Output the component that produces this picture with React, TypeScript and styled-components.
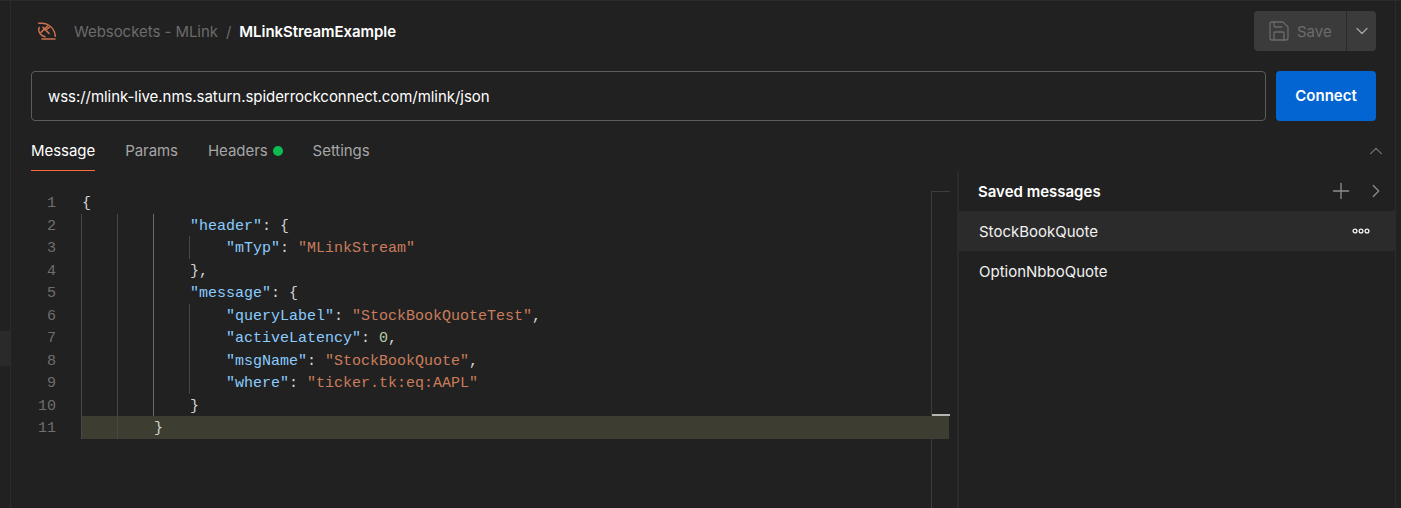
import React from "react";
import styled, { createGlobalStyle } from "styled-components";
import { ChevronDown, ChevronRight, ChevronUp, Plus, Save } from "lucide-react";

const GlobalStyle = createGlobalStyle`
	html, body {
		margin: 0;
		padding: 0;
		background: #212121;
		overflow: hidden;
	}
`;

const UI_FONT = `Inter, "Liberation Sans", sans-serif`;

// 전체 영역
const Wrapper = styled.div`
	position: relative;
	width: 1401px;
	height: 508px;
	display: flex;
	overflow: hidden;
	box-sizing: border-box;
	border-top: 1px solid #2b2b2b;
	background: #212121;
	font-family: ${UI_FONT};
`;

const TopAccent = styled.div`
	position: absolute;
	top: -1px;
	left: 451px;
	width: 194px;
	height: 1px;
	background: #ff6c37;
`;

const LeftRail = styled.div`
	width: 10px;
	flex-shrink: 0;
	padding-top: 330px;
	border-right: 1px solid #2b2b2b;
`;

const RailItem = styled.div`
	height: 35px;
	background: #2a2a2a;
`;

const RightRail = styled.div`
	width: 5px;
	flex-shrink: 0;
	border-left: 1px solid #2b2b2b;
`;

const Main = styled.div`
	flex: 1;
	min-width: 0;
	display: flex;
	flex-direction: column;
`;

const Header = styled.div`
	height: 40px;
	margin-top: 10px;
	padding: 0 19px 0 27px;
	display: flex;
	align-items: center;
`;

const Crumbs = styled.div`
	flex: 1;
	display: flex;
	align-items: center;
	font-size: 15px;
	letter-spacing: -0.05px;
`;

const Logo = styled.svg`
	width: 18px;
	height: 18px;
	margin-right: 18px;
`;

const CrumbParent = styled.span`
	color: #6b6b6b;
`;

const CrumbSlash = styled.span`
	color: #6b6b6b;
	margin: 0 8px;
`;

const CrumbName = styled.span`
	color: #ffffff;
	font-weight: 600;
`;

const SaveGroup = styled.div`
	width: 122px;
	height: 40px;
	display: flex;
	border-radius: 4px;
	overflow: hidden;
	background: #3b3b3b;
	color: #6b6b6b;
`;

const SaveLabel = styled.div`
	flex: 1;
	display: flex;
	align-items: center;
	gap: 6px;
	padding-left: 13px;
	font-size: 15px;
	border-right: 1px solid #2b2b2b;
`;

const SaveMenu = styled.div`
	width: 29px;
	display: flex;
	align-items: center;
	justify-content: center;
	color: #a6a6a6;
`;

const UrlRow = styled.div`
	margin-top: 20px;
	padding: 0 19px 0 20px;
	display: flex;
	gap: 10px;
`;

const UrlInput = styled.div`
	flex: 1;
	height: 50px;
	box-sizing: border-box;
	padding-left: 16px;
	display: flex;
	align-items: center;
	border: 1px solid #5c5c5c;
	border-radius: 4px;
	color: #ffffff;
	font-size: 15px;
	letter-spacing: -0.05px;
`;

const ConnectButton = styled.button`
	width: 100px;
	height: 50px;
	padding: 0 0 2px;
	border: none;
	border-radius: 4px;
	background: #0265d2;
	color: #ffffff;
	font-family: ${UI_FONT};
	font-size: 15px;
	font-weight: 600;
`;

const TabBar = styled.div`
	height: 50px;
	padding: 0 19px 0 20px;
	display: flex;
	gap: 30px;
	align-items: stretch;
`;

const Tab = styled.div<{ $active?: boolean }>`
	display: flex;
	align-items: center;
	gap: 5px;
	box-sizing: border-box;
	padding-top: 10px;
	font-size: 15px;
	letter-spacing: -0.05px;
	color: ${(props) => (props.$active ? "#ffffff" : "#a6a6a6")};
	border-bottom: 1px solid ${(props) => (props.$active ? "#ff6c37" : "transparent")};
`;

const Dot = styled.span`
	width: 10px;
	height: 10px;
	border-radius: 50%;
	background: #0cbb52;
`;

const TabChevron = styled.div`
	margin-left: auto;
	margin-right: -11px;
	padding-top: 10px;
	display: flex;
	align-items: center;
	color: #6b6b6b;
`;

const Body = styled.div`
	flex: 1;
	min-height: 0;
	display: flex;
`;

// 코드 에디터 영역
const Editor = styled.div`
	position: relative;
	width: 938px;
	flex-shrink: 0;
	padding-top: 20px;
	font-family: "Liberation Mono", monospace;
	font-size: 15px;
`;

const Ruler = styled.div`
	position: absolute;
	top: 20px;
	bottom: 0;
	left: 920px;
	width: 18px;
	border-left: 1px solid #3d3d3d;
	border-top: 1px solid #3d3d3d;
`;

const RulerMark = styled.div`
	position: absolute;
	top: 222px;
	left: 0;
	width: 18px;
	height: 2px;
	background: #b5b5ad;
`;

const Line = styled.div`
	height: 22.5px;
	line-height: 26.5px;
	display: flex;
	white-space: pre;
	color: #d4d4d4;
`;

const LineNo = styled.span`
	width: 45px;
	flex-shrink: 0;
	margin-right: 25px;
	text-align: right;
	color: #6e6e6e;
`;

const LineBody = styled.div<{ $current?: boolean }>`
	flex: 1;
	display: flex;
	background: ${(props) => (props.$current ? "#3e3d32" : "transparent")};
`;

const Indent = styled.span<{ $active?: boolean }>`
	width: 36px;
	flex-shrink: 0;
	box-sizing: border-box;
	border-left: 1px solid ${(props) => (props.$active ? "#6a6a6a" : "#484848")};
`;

const Code = styled.span`
	padding-left: 1px;
`;

const Key = styled.span`
	color: #8accff;
`;

const Str = styled.span`
	color: #c97d5c;
`;

const Num = styled.span`
	color: #b5cea8;
`;

// 저장된 메시지 패널
const Side = styled.div`
	flex: 1;
	min-width: 0;
	margin-left: 8px;
	border-left: 2px solid #2b2b2b;
`;

const SideHead = styled.div`
	height: 40px;
	padding: 0 19px 0 19px;
	display: flex;
	align-items: center;
	color: #ffffff;
	font-size: 15px;
	font-weight: 600;
`;

const SideTitle = styled.span`
	flex: 1;
`;

const SideIcons = styled.div`
	display: flex;
	align-items: center;
	gap: 11px;
	margin-right: -11px;
	color: #8f8f8f;
`;

const SavedRow = styled.div<{ $active?: boolean }>`
	height: 40px;
	padding: 0 25px 0 20px;
	display: flex;
	align-items: center;
	justify-content: space-between;
	color: #f2f2f2;
	font-size: 15px;
	background: ${(props) => (props.$active ? "#2b2b2b" : "transparent")};
`;

const MoreIcon = styled.svg`
	width: 18px;
	height: 6px;
`;

type CodeLine = {
	guides: number;
	extraGuide?: boolean;
	content: React.ReactNode;
};

const codeLines: CodeLine[] = [
	{ guides: 0, content: "{" },
	{ guides: 3, content: <><Key>"header"</Key>: {"{"}</> },
	{ guides: 3, extraGuide: true, content: <><Key>"mTyp"</Key>: <Str>"MLinkStream"</Str></> },
	{ guides: 3, content: "}," },
	{ guides: 3, content: <><Key>"message"</Key>: {"{"}</> },
	{ guides: 3, extraGuide: true, content: <><Key>"queryLabel"</Key>: <Str>"StockBookQuoteTest"</Str>,</> },
	{ guides: 3, extraGuide: true, content: <><Key>"activeLatency"</Key>: <Num>0</Num>,</> },
	{ guides: 3, extraGuide: true, content: <><Key>"msgName"</Key>: <Str>"StockBookQuote"</Str>,</> },
	{ guides: 3, extraGuide: true, content: <><Key>"where"</Key>: <Str>"ticker.tk:eq:AAPL"</Str></> },
	{ guides: 3, content: "}" },
	{ guides: 2, content: "}" },
];

const App = () => {
	return (
		<Wrapper>
			<GlobalStyle />
			<TopAccent />
			<LeftRail>
				<RailItem />
			</LeftRail>
			<Main>
				<Header>
					<Crumbs>
						<Logo viewBox="0 0 18 18" fill="none" stroke="#cc7150" strokeWidth="1.5" strokeLinecap="round">
							<path d="M.7 1.2h3.6c2.2 0 4.4.6 6.2 1.8 3.6 2.4 6.6 6.4 6.8 11.2" />
							<path d="M4 17h13" />
							<path d="M1.2 5.4c-.8 2.2-.4 4.6 1.2 6.6 1.2 1.5 2.8 2.4 4.6 2.8" />
							<path d="M9.6 4 3 10.4M5 5.4l6 6M7.8 8l3.6-2.8" />
						</Logo>
						<CrumbParent>Websockets - MLink</CrumbParent>
						<CrumbSlash>/</CrumbSlash>
						<CrumbName>MLinkStreamExample</CrumbName>
					</Crumbs>
					<SaveGroup>
						<SaveLabel>
							<Save size={24} strokeWidth={1.3} />
							Save
						</SaveLabel>
						<SaveMenu>
							<ChevronDown size={20} strokeWidth={1.5} />
						</SaveMenu>
					</SaveGroup>
				</Header>
				<UrlRow>
					<UrlInput>wss://mlink-live.nms.saturn.spiderrockconnect.com/mlink/json</UrlInput>
					<ConnectButton>Connect</ConnectButton>
				</UrlRow>
				<TabBar>
					<Tab $active>Message</Tab>
					<Tab>Params</Tab>
					<Tab>
						Headers
						<Dot />
					</Tab>
					<Tab>Settings</Tab>
					<TabChevron>
						<ChevronUp size={22} strokeWidth={1.2} />
					</TabChevron>
				</TabBar>
				<Body>
					<Editor>
						<Ruler>
							<RulerMark />
						</Ruler>
						{codeLines.map((line, i) => (
							<Line key={i}>
								<LineNo>{i + 1}</LineNo>
								<LineBody $current={i === codeLines.length - 1}>
									{Array.from({ length: line.guides }).map((_, g) => (
										<Indent key={g} $active={g === 2} />
									))}
									{line.extraGuide && <Indent />}
									<Code>{line.content}</Code>
								</LineBody>
							</Line>
						))}
					</Editor>
					<Side>
						<SideHead>
							<SideTitle>Saved messages</SideTitle>
							<SideIcons>
								<Plus size={26} strokeWidth={1.2} />
								<ChevronRight size={22} strokeWidth={1.3} />
							</SideIcons>
						</SideHead>
						<SavedRow $active>
							StockBookQuote
							<MoreIcon viewBox="0 0 18 6" fill="none" stroke="#f2f2f2" strokeWidth="1.3">
								<circle cx="3" cy="3" r="1.9" />
								<circle cx="9" cy="3" r="1.9" />
								<circle cx="15" cy="3" r="1.9" />
							</MoreIcon>
						</SavedRow>
						<SavedRow>OptionNbboQuote</SavedRow>
					</Side>
				</Body>
			</Main>
			<RightRail />
		</Wrapper>
	);
};

export default App;
